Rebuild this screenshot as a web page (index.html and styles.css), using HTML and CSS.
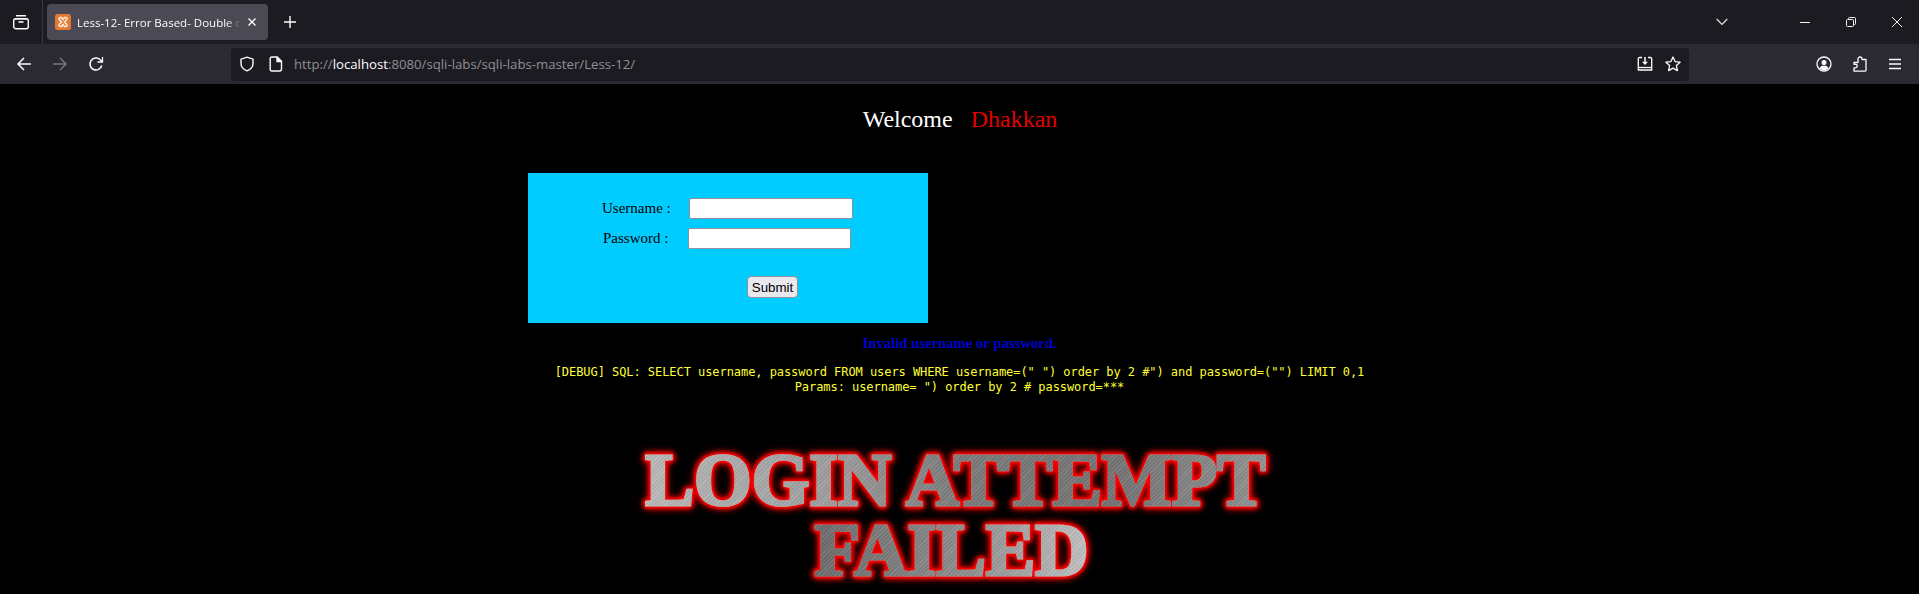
FILE: index.html
```html
<!DOCTYPE html>
<html lang="en">
<head>
    <meta charset="UTF-8">
    <title>Less-12- Error Based- Double quotes</title>
    <link rel="stylesheet" href="styles.css">
</head>
<body>
    <div class="tabstrip">
        <div class="tabs-btn">
            <svg width="18" height="18" viewBox="0 0 18 18" fill="none" stroke="#fbfbfe" stroke-width="1.4">
                <path d="M4 2.7h10M2.7 5.7h12.6"/>
                <rect x="1.7" y="5.7" width="14.6" height="10" rx="2"/>
                <path d="M6.5 9h5" stroke-width="1.6"/>
            </svg>
        </div>
        <div class="tab">
            <svg class="favicon" width="16" height="16" viewBox="0 0 16 16">
                <rect width="16" height="16" rx="2.500" fill="#e37a33"/>
                <path d="M6.500 8L4.200 5.600a1.300 1.300 0 0 1 1-2.100h1.300L8 5.500l1.500-2h1.300a1.300 1.300 0 0 1 1 2.100L9.500 8l2.300 2.400a1.300 1.300 0 0 1-1 2.100H9.500L8 10.500l-1.500 2H5.200a1.300 1.300 0 0 1-1-2.100z" fill="none" stroke="#fdeee0" stroke-width="1.500"/>
            </svg>
            <span class="tab-title">Less-12- Error Based- Double quotes</span>
            <svg class="tab-close" width="10" height="10" viewBox="0 0 10 10" stroke="#fbfbfe" stroke-width="1.4"><path d="M1.500 1.500l7 7M8.500 1.500l-7 7"/></svg>
        </div>
        <div class="new-tab">
            <svg width="14" height="14" viewBox="0 0 14 14" stroke="#fbfbfe" stroke-width="1.400"><path d="M7 1v12M1 7h12"/></svg>
        </div>
        <div class="strip-right">
            <svg class="list-tabs" width="12" height="8" viewBox="0 0 12 8" fill="none" stroke="#e4e4e8" stroke-width="1.200"><path d="M.7 1l5.300 5.500L11.300 1"/></svg>
            <svg class="win-btn" width="10" height="10" viewBox="0 0 10 10" stroke="#f4f4f4"><path d="M0 5.500h10"/></svg>
            <svg class="win-btn" width="10" height="10" viewBox="0 0 10 10" fill="none" stroke="#f4f4f4"><rect x=".5" y="2.500" width="7" height="7" rx="1"/><path d="M2.500 2.500v-1a1 1 0 0 1 1-1h5a1 1 0 0 1 1 1v5a1 1 0 0 1-1 1h-1"/></svg>
            <svg class="win-btn" width="10" height="10" viewBox="0 0 10 10" stroke="#f4f4f4"><path d="M0 0l10 10M10 0L0 10"/></svg>
        </div>
    </div>

    <div class="toolbar">
        <svg class="nav" width="16" height="16" viewBox="0 0 16 16" fill="none" stroke="#fbfbfe" stroke-width="1.500"><path d="M15 8H2M8 2L2 8l6 6"/></svg>
        <svg class="nav" width="16" height="16" viewBox="0 0 16 16" fill="none" stroke="#75747c" stroke-width="1.500"><path d="M1 8h13M8 2l6 6-6 6"/></svg>
        <svg class="nav" width="16" height="16" viewBox="0 0 16 16" fill="none" stroke="#fbfbfe" stroke-width="1.500"><path d="M13.800 9.500A6 6 0 1 1 12 3.500l2 2"/><path d="M14.500 1v5h-5" stroke-width="1.300"/></svg>
        <div class="urlbar">
            <svg width="16" height="16" viewBox="0 0 16 16" fill="none" stroke="#fbfbfe" stroke-width="1.400"><path d="M8 1.200l6 2v4.300c0 3.500-2.500 6-6 7.300-3.500-1.300-6-3.800-6-7.300V3.200z"/></svg>
            <svg class="page-icon" width="14" height="16" viewBox="0 0 14 16" fill="none" stroke="#fbfbfe" stroke-width="1.400"><path d="M2.700 1h5.600L12.500 5.200V13a2 2 0 0 1-2 2h-7.800a1.500 1.500 0 0 1-1.500-1.500V2.500A1.500 1.500 0 0 1 2.700 1z"/><path d="M8 1v4.500h4.500" fill="#fbfbfe"/></svg>
            <div class="url">http://<b>localhost</b>:8080/sqli-labs/sqli-labs-master/Less-12/</div>
            <svg class="url-end" width="16" height="16" viewBox="0 0 16 16" fill="none" stroke="#fbfbfe" stroke-width="1.300"><path d="M5 1.500H2.500a1.200 1.200 0 0 0-1.200 1.200v11.300h13.400V2.700a1.200 1.200 0 0 0-1.200-1.200H11"/><path d="M1.300 11.500h13.400"/><path d="M8 1v6.500" stroke-width="1.500"/><path d="M5 5.800h6L8 9z" fill="#fbfbfe" stroke="none"/></svg>
            <svg class="url-star" width="16" height="16" viewBox="0 0 16 16" fill="none" stroke="#fbfbfe" stroke-width="1.300"><path d="M8 1l2.100 4.600 5 .6-3.700 3.400 1 5L8 12.100 3.600 14.600l1-5L.9 6.200l5-.6z" stroke-linejoin="round"/></svg>
        </div>
        <svg class="tool" width="16" height="16" viewBox="0 0 16 16" fill="none" stroke="#fbfbfe" stroke-width="1.300"><circle cx="8" cy="8" r="7"/><circle cx="8" cy="6.500" r="2.500" fill="#fbfbfe" stroke="none"/><path d="M3.500 12.200c1-2 2.500-2.700 4.500-2.700s3.500.7 4.500 2.700c-1.200 1.300-2.700 2-4.500 2s-3.300-.7-4.500-2z" fill="#fbfbfe" stroke="none"/></svg>
        <svg class="tool" width="16" height="16" viewBox="0 0 16 16" fill="none" stroke="#fbfbfe" stroke-width="1.300"><path d="M6 3.500V3a2 2 0 0 1 4 0v.500h4v10.800a.8.8 0 0 1-.8.8H2v-3.200h1.500a1.800 1.800 0 0 0 0-3.600H2V6.500h4z" stroke-linejoin="round"/></svg>
        <svg class="tool" width="14" height="12" viewBox="0 0 14 12" stroke="#fbfbfe" stroke-width="1.300"><path d="M1 1.500h12M1 6h12M1 10.500h12"/></svg>
    </div>

    <main class="page">
        <div class="welcome">Welcome&nbsp;&nbsp;&nbsp;<span class="red">Dhakkan</span></div>

        <form class="login-box">
            <div class="row">
                <label>Username : </label>
                <input type="text" class="user-input">
            </div>
            <div class="row pass-row">
                <label>Password : </label>
                <input type="password" class="pass-input">
            </div>
            <button type="button" class="submit">Submit</button>
        </form>

        <div class="invalid">Invalid username or password.</div>
        <div class="debug">[DEBUG] SQL: SELECT username, password FROM users WHERE username=(" ") order by 2 #") and password=("") LIMIT 0,1<br>Params: username= ") order by 2 # password=***</div>

        <div class="banner">
            <span class="metal">LOGIN ATTEMPT</span><br>
            <span class="metal metal-2">FAILED</span>
        </div>
    </main>
</body>
</html>
```

FILE: styles.css
```css
html, body { margin: 0; padding: 0; height: 594px; overflow: hidden; background: #000; }
body { font-family: "Liberation Serif", serif; }

/* browser chrome */
.tabstrip { display: flex; align-items: center; height: 44px; background: #1c1b22; font-family: "Open Sans", sans-serif; }
.tabs-btn { display: flex; justify-content: center; align-items: center; width: 42px; height: 44px; border-right: 1px solid #3a3942; }
.tab { display: flex; align-items: center; width: 221px; height: 36px; margin-left: 4px; padding: 0 8px; box-sizing: border-box; background: #4a4954; border-radius: 4px; }
.tab-title { flex: 1; margin-left: 6px; font-size: 11.5px; color: #fbfbfe; white-space: nowrap; overflow: hidden; -webkit-mask-image: linear-gradient(to left, transparent 0, #000 14px); mask-image: linear-gradient(to left, transparent 0, #000 14px); }
.tab-close { margin: 0 3px 0 6px; }
.new-tab { display: flex; margin-left: 15px; }
.strip-right { display: flex; align-items: center; margin-left: auto; }
.list-tabs { margin-right: 72px; }
.win-btn { margin-right: 36px; }
.win-btn:last-child { margin-right: 17px; }

.toolbar { display: flex; align-items: center; height: 40px; padding-left: 16px; background: #2b2a33; }
.nav { margin-right: 20px; }
.urlbar { display: flex; align-items: center; width: 1458px; height: 33px; margin-left: 107px; padding: 0 8px; box-sizing: border-box; background: #1c1b22; border-radius: 4px; font-family: "Open Sans", sans-serif; }
.page-icon { margin-left: 14px; }
.url { flex: 1; margin-left: 11px; font-size: 13.2px; color: #8f8f96; }
.url b { font-weight: 400; color: #fbfbfe; }
.url-star { margin-left: 12px; }
.tool { margin-left: 20px; }
.urlbar + .tool { margin-left: 127px; }

/* page */
.page { padding-top: 22px; background: #000; text-align: center; }
.welcome { padding-left: 1px; font-size: 24px; color: #fff; line-height: 27px; }
.red { color: #e00000; }

.login-box { width: 400px; height: 150px; margin: 40px 0 0 528px; padding-top: 25px; box-sizing: border-box; background: #00ccff; font-size: 15px; text-align: left; }
.row { display: flex; align-items: center; height: 21px; margin-left: 74px; }
.row label { width: 87px; }
.pass-row { margin-top: 9px; margin-left: 75px; }
.pass-row label { width: 85px; }
.user-input, .pass-input { height: 21px; padding: 1px 2px; box-sizing: border-box; background: #fff; border: 1px solid #8f8f9d; border-radius: 2px; }
.user-input { width: 164px; }
.pass-input { width: 163px; }
.submit { display: block; width: 51px; height: 22px; margin: 27px 0 0 219px; padding: 0; background: #e9e9ed; border: 1px solid #8f8f9d; border-radius: 4px; font: 13.333px "Liberation Sans", sans-serif; color: #000; }

.invalid { margin-top: 11px; font-size: 14.7px; font-weight: bold; line-height: 18px; color: #0000cd; }
.debug { margin-top: 13px; font-family: "DejaVu Sans Mono", monospace; font-size: 12px; letter-spacing: -0.06px; line-height: 15px; color: #ffff33; }

.banner { margin-top: 50px; padding-right: 8px; font-size: 74px; font-weight: bold; line-height: 70px; filter: drop-shadow(.5px .5px 0 rgba(255,255,255,.4)) drop-shadow(0 0 1.500px #f00) drop-shadow(0 0 1.500px #f00) drop-shadow(0 0 2px #f00) drop-shadow(0 0 3px #b00); }
.metal { -webkit-text-stroke: 3px transparent; color: transparent; background: repeating-linear-gradient(135deg, rgba(255,255,255,.07) 0 1px, rgba(0,0,0,.05) 1px 3px), linear-gradient(90deg, #bcbcbc 0, #a0a0a0 30%, #7e7e7e 50%, #767676 75%, #949494 100%); -webkit-background-clip: text; background-clip: text; }
.metal-2 { display: inline-block; margin-right: 8px; background: repeating-linear-gradient(135deg, rgba(255,255,255,.07) 0 1px, rgba(0,0,0,.05) 1px 3px), linear-gradient(90deg, #6e6e6e 0, #909090 55%, #c4c4c4 100%); -webkit-background-clip: text; background-clip: text; }
```
